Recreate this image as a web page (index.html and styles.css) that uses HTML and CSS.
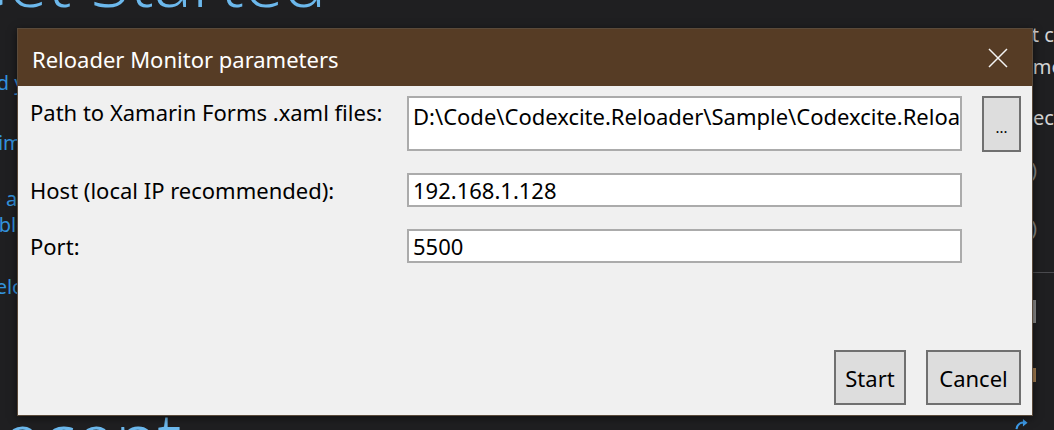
FILE: index.html
```html
<!DOCTYPE html>
<html lang="en">
<head>
<meta charset="utf-8">
<title>Reloader Monitor parameters</title>
<link rel="stylesheet" href="styles.css">
</head>
<body>
<div class="bg">
  <div class="start-left">
    <h1 class="hero">Get Started</h1>
    <a class="link l1">Build your first app in 5 minutes!</a>
    <a class="link l2">Maximize your productivity with these tips and tricks for Visual Studio</a>
    <a class="link l3">Take advantage of the newest technologies to deploy beautiful, low-cost and<br>reliable websites</a>
    <a class="link l4">Develop modern, fully-native, Android and iOS apps</a>
    <h1 class="hero recent">Recent</h1>
  </div>
  <div class="start-right">
    <p class="rt r1">Get code from a remote version control system or open</p>
    <p class="rt r2">something on your local drive.</p>
    <p class="rt r3">Checkout from:</p>
    <p class="rt paren p1">)</p>
    <p class="rt paren p2">)</p>
    <div class="sep"></div>
    <div class="bar gray"></div>
    <div class="bar brown"></div>
    <svg class="arrow" width="16" height="12" viewBox="0 0 16 12"><path d="M2 11 C3 5 7 3 12 4" fill="none" stroke="#3d9be9" stroke-width="2.2"/><path d="M9 0 L14 4 L9 8 Z" fill="#3d9be9"/></svg>
  </div>
</div>

<div class="dialog">
  <div class="titlebar">
    <span class="title">Reloader Monitor parameters</span>
    <div class="close">
      <svg width="20" height="20" viewBox="0 0 20 20"><path d="M1 1 L19 19 M19 1 L1 19" stroke="#f4f4f4" stroke-width="1.5" fill="none"/></svg>
    </div>
  </div>
  <div class="body">
    <div class="form">
      <label class="lbl lbl-top">Path to Xamarin Forms .xaml files:</label>
      <div class="field tall">D:\Code\Codexcite.Reloader\Sample\Codexcite.Reloader.Sample</div>
      <div class="btn browse">...</div>

      <label class="lbl">Host (local IP recommended):</label>
      <div class="field">192.168.1.128</div>
      <div></div>

      <label class="lbl">Port:</label>
      <div class="field">5500</div>
      <div></div>
    </div>
    <div class="actions">
      <div class="btn act start">Start</div>
      <div class="btn act cancel">Cancel</div>
    </div>
  </div>
</div>
</body>
</html>
```

FILE: styles.css
```css
html, body {
  margin: 0;
  padding: 0;
}
body {
  width: 1054px;
  height: 430px;
  overflow: hidden;
  background: #1f1f21;
  position: relative;
  font-family: "Noto Sans", "Open Sans", sans-serif;
}

/* background start page */
.bg {
  display: flex;
  height: 430px;
  overflow: hidden;
}
.start-left {
  width: 1052px;
  margin-left: -42px;
  flex: none;
  display: flex;
  flex-direction: column;
  align-items: flex-start;
}
.hero {
  margin: -57px 0 0 -2px;
  font-family: "Open Sans", "Noto Sans", sans-serif;
  font-weight: 300;
  font-size: 72px;
  line-height: 72px;
  color: #6cb8ec;
  white-space: nowrap;
}
.hero.recent {
  margin-top: 101px;
  margin-left: 1px;
}
.link {
  display: block;
  font-size: 20px;
  line-height: 26px;
  color: #3392dc;
  white-space: nowrap;
}
.l1 { margin-top: 55px; margin-left: 3px; }
.l2 { margin-top: 34px; }
.l3 { margin-top: 30px; }
.l4 { margin-top: 36px; margin-left: 2px; }

.start-right {
  flex: none;
  width: 300px;
  display: flex;
  flex-direction: column;
}
.rt {
  margin: 0;
  font-size: 20px;
  color: #d4d4d4;
  white-space: nowrap;
}
.r1 { margin-top: 19px; line-height: 32px; margin-left: -4px; }
.r2 { line-height: 32px; margin-left: 1px; }
.r3 { margin-top: 22px; line-height: 26px; margin-left: -2px; }
.paren {
  color: #8a8a8a;
  line-height: 26px;
  margin-left: 21px;
}
.p1 { margin-top: 26px; }
.p2 { margin-top: 32px; }
.sep {
  margin-top: 31px;
  margin-left: 23px;
  height: 1px;
  background: #4a4a4e;
}
.bar {
  margin-left: 23px;
  width: 3px;
}
.bar.gray {
  margin-top: 27px;
  height: 25px;
  background: #8c8c8c;
}
.bar.brown {
  margin-top: 45px;
  height: 15px;
  background: #a57e50;
}
.arrow {
  margin-top: 37px;
  margin-left: 4px;
}

/* dialog */
.dialog {
  position: absolute;
  left: 17px;
  top: 28px;
  width: 1016px;
  height: 388px;
  box-sizing: border-box;
  border: 1px solid #5a4a3a;
  display: flex;
  flex-direction: column;
  box-shadow: 0 2px 8px rgba(0, 0, 0, 0.55);
}
.titlebar {
  height: 57px;
  flex: none;
  background: #563c25;
  display: flex;
  align-items: flex-start;
}
.title {
  padding: 15px 0 0 14px;
  font-size: 22px;
  line-height: 30px;
  color: #ffffff;
}
.close {
  margin-left: auto;
  margin-right: 11px;
  width: 46px;
  height: 57px;
  display: flex;
  align-items: center;
  justify-content: center;
}
.body {
  flex: 1;
  background: #f0f0f0;
  padding: 10px 11px 10px 12px;
  display: flex;
  flex-direction: column;
}
.form {
  display: grid;
  grid-template-columns: 357px 555px 39px;
  grid-template-rows: 55px 34px 34px;
  column-gap: 20px;
  row-gap: 22px;
}
.lbl {
  font-size: 22px;
  line-height: 30px;
  color: #000;
  align-self: center;
  white-space: nowrap;
}
.lbl-top {
  align-self: start;
  margin-top: 1px;
}
.field {
  box-sizing: border-box;
  height: 34px;
  background: #fff;
  border: 2px solid #ababab;
  padding: 0 4px;
  font-size: 22px;
  line-height: 30px;
  color: #000;
  white-space: nowrap;
  overflow: hidden;
}
.field.tall {
  height: 55px;
  padding-top: 3px;
  align-self: start;
}
.btn {
  box-sizing: border-box;
  background: #dddddd;
  border: 2px solid #707070;
  color: #000;
  display: flex;
  align-items: center;
  justify-content: center;
}
.browse {
  height: 56px;
  font-size: 15px;
  padding-top: 6px;
  align-self: start;
}
.actions {
  margin-top: auto;
  display: flex;
  justify-content: flex-end;
  gap: 20px;
}
.act {
  height: 55px;
  font-size: 22px;
  line-height: 30px;
}
.start { width: 72px; }
.cancel { width: 95px; }
```
